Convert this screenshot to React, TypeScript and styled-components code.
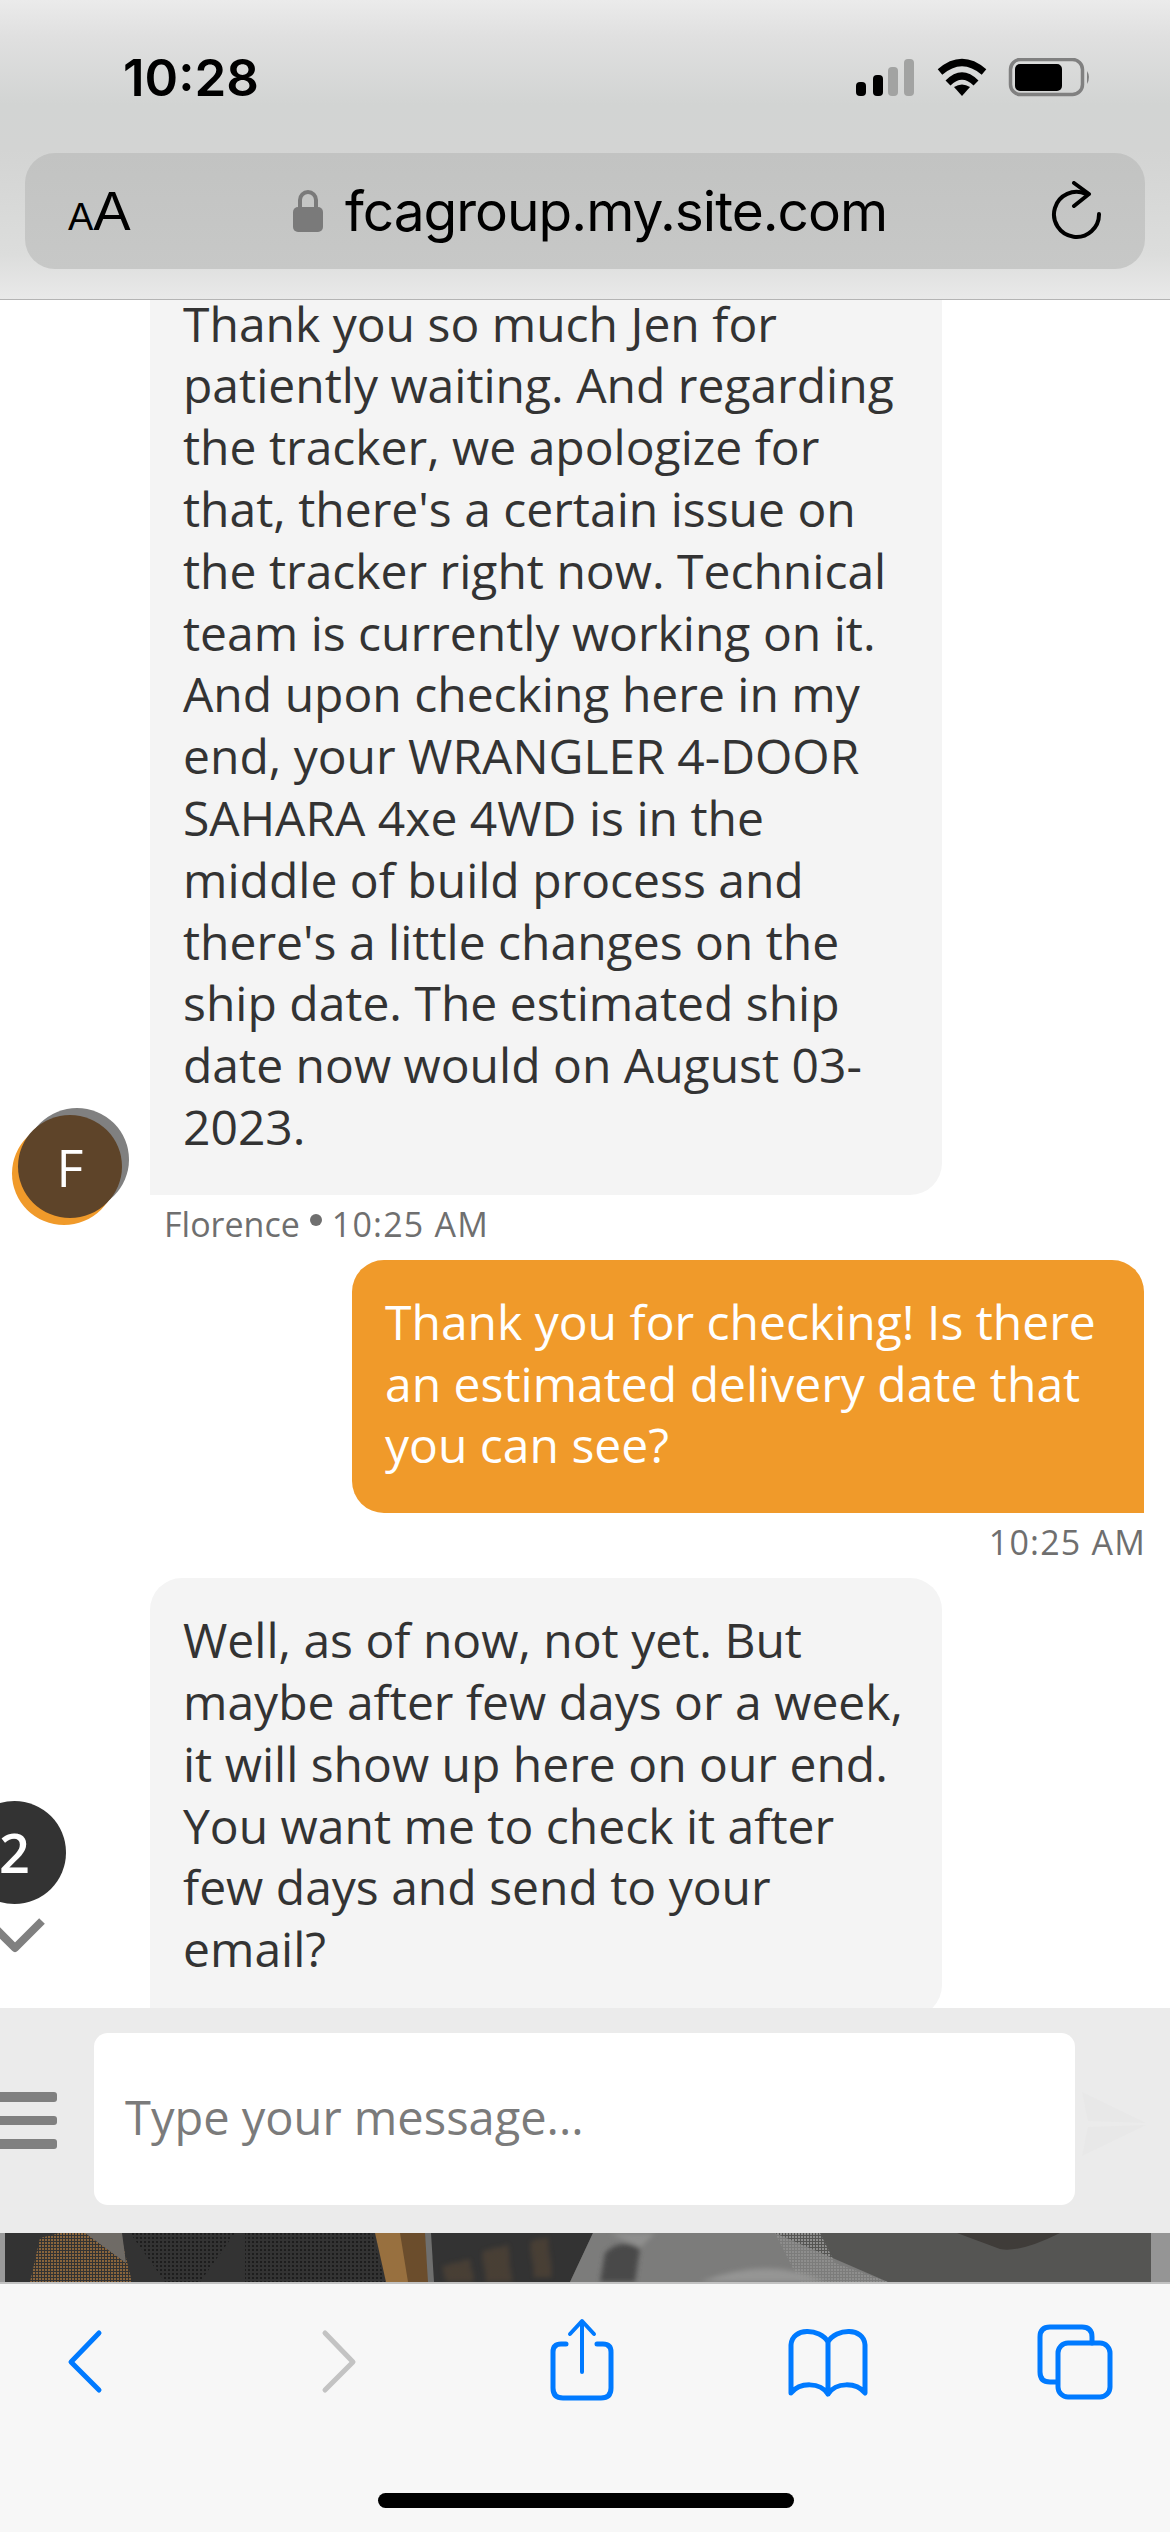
import styled, {createGlobalStyle} from 'styled-components'

const GlobalStyle = createGlobalStyle`
  html, body { margin: 0; padding: 0; background: #fff; }
  * { box-sizing: border-box; }
`

const Phone = styled.div`
  width: 1170px;
  height: 2532px;
  display: flex;
  flex-direction: column;
  overflow: hidden;
  font-family: "Open Sans", "Liberation Sans", sans-serif;
`

const BrowserTop = styled.header`
  height: 300px;
  flex-shrink: 0;
  padding: 0 25px;
  display: flex;
  flex-direction: column;
  background: linear-gradient(180deg, #ebebeb 0%, #e0e0e0 12%, #d2d4d3 35%, #d3d4d3 50%, #dcdddc 85%, #e9e9e9 100%);
  border-bottom: 1px solid #b4b4b4;
`
const StatusBar = styled.div`
  height: 153px;
  padding: 0 54px 0 98px;
  display: flex;
  align-items: flex-start;
  justify-content: space-between;
  svg { display: block; }
`
const Clock = styled.div`
  margin-top: 50px;
  font: 600 51px/56px Inter, sans-serif;
  color: #000;
`
const StatusIcons = styled.div`
  margin-top: 58px;
  display: flex;
`
const AddressBar = styled.div`
  height: 116px;
  border-radius: 30px;
  background: linear-gradient(180deg, #c2c3c2, #c7c8c7);
  padding: 0 41px 0 43px;
  display: flex;
  align-items: center;
  color: #000;
`
const TextSize = styled.div`
  width: 225px;
  margin-top: 6px;
  font: 400 56px/60px "Liberation Sans", sans-serif;
  small { font-size: 38px; }
`
const Url = styled.div`
  display: flex;
  align-items: center;
  gap: 22px;
  font: 400 55px/66px Inter, sans-serif;
  letter-spacing: -1px;
  flex: 1;
`

const Chat = styled.main`
  position: relative;
  flex: 1;
  min-height: 0;
  overflow: hidden;
  background: #fff;
  display: flex;
  flex-direction: column;
  justify-content: flex-end;
  padding: 0 26px 0 150px;
`
const Bubble = styled.div<{$mine?: boolean}>`
  flex-shrink: 0;
  width: 792px;
  padding: 31px 33px 37px;
  font-size: 48px;
  line-height: 61.8px;
  white-space: nowrap;
  align-self: ${p => p.$mine ? 'flex-end' : 'flex-start'};
  background: ${p => p.$mine ? '#f09a2a' : '#f4f4f4'};
  color: ${p => p.$mine ? '#fff' : '#333'};
  border-radius: ${p => p.$mine ? '32px 32px 0 32px' : '32px 32px 32px 0'};
`
const LastBubble = styled(Bubble)`
  margin-bottom: -9px;
`
const Meta = styled.div<{$mine?: boolean}>`
  flex-shrink: 0;
  height: 65px;
  padding: 0 0 7px 14px;
  margin-right: -2px;
  display: flex;
  align-items: center;
  gap: 10px;
  justify-content: ${p => p.$mine ? 'flex-end' : 'flex-start'};
  font-size: 34px;
  color: #6f6f6f;
  i {
    width: 12px;
    height: 12px;
    margin-bottom: 8px;
    border-radius: 50%;
    background: #6f6f6f;
  }
  b {
    font-weight: 400;
    letter-spacing: 1.2px;
  }
`
const Avatar = styled.div`
  position: absolute;
  left: 18px;
  bottom: 790px;
  width: 104px;
  height: 103px;
  border-radius: 50%;
  background: #5e4429;
  color: #fff;
  font-size: 52px;
  display: flex;
  align-items: center;
  justify-content: center;
  box-shadow: -6px 7px 0 #f09a2a, 7px -7px 0 #808080;
`
const UnreadBadge = styled.div`
  position: absolute;
  left: -37px;
  top: 1501px;
  width: 103px;
  height: 103px;
  border-radius: 50%;
  background: #333;
  color: #fff;
  font: 600 54px/103px "Open Sans", sans-serif;
  text-align: center;
`
const DownChevron = styled.svg`
  position: absolute;
  left: -16px;
  top: 1616px;
`

const Composer = styled.form`
  height: 225px;
  flex-shrink: 0;
  margin: 0;
  background: #ebebeb;
  display: grid;
  grid-template-columns: 94px 981px 95px;
  align-items: center;
`
const MenuButton = styled.div`
  display: flex;
  flex-direction: column;
  gap: 14px;
  width: 57px;
  span {
    height: 9.5px;
    border-radius: 0 3px 3px 0;
    background: #808080;
  }
`
const Input = styled.div`
  height: 172px;
  margin-bottom: 3px;
  padding: 0 31px 5px;
  border-radius: 14px;
  background: #fff;
  display: flex;
  align-items: center;
  font-size: 47px;
  color: #7b7b7b;
`
const SendIcon = styled.svg`
  margin: 6px 0 0 5px;
`

const Strip = styled.svg`
  display: block;
  flex-shrink: 0;
`

const Toolbar = styled.nav`
  height: 250px;
  flex-shrink: 0;
  background: #f7f7f7;
  border-top: 2px solid #c2c2c2;
  position: relative;
`
const ToolbarIcons = styled.svg`
  position: absolute;
  left: 0;
  top: 0;
`
const HomeBar = styled.div`
  position: absolute;
  bottom: 24px;
  left: 378px;
  width: 416px;
  height: 15px;
  border-radius: 8px;
  background: #000;
`

const first = [
  'Thank you so much Jen for',
  'patiently waiting. And regarding',
  'the tracker, we apologize for',
  "that, there's a certain issue on",
  'the tracker right now. Technical',
  'team is currently working on it.',
  'And upon checking here in my',
  'end, your WRANGLER 4-DOOR',
  'SAHARA 4xe 4WD is in the',
  'middle of build process and',
  "there's a little changes on the",
  'ship date. The estimated ship',
  'date now would on August 03-',
  '2023.',
]
const second = [
  'Thank you for checking! Is there',
  'an estimated delivery date that',
  'you can see?',
]
const third = [
  'Well, as of now, not yet. But',
  'maybe after few days or a week,',
  'it will show up here on our end.',
  'You want me to check it after',
  'few days and send to your',
  'email?',
]

const Lines: React.FC<{items: string[]}> = ({items}) => <>
  {items.map(line => <div key={line}>{line}</div>)}
</>

const App: React.FC = () => {
  return <Phone>
    <GlobalStyle />
    <BrowserTop>
      <StatusBar>
        <Clock>10:28</Clock>
        <StatusIcons>
          <svg width="235" height="40" viewBox="0 0 235 40">
            <rect x="0" y="24" width="10" height="14" rx="4" fill="#000" />
            <rect x="17" y="17" width="10" height="21" rx="4" fill="#000" />
            <rect x="32" y="9" width="10" height="29" rx="4" fill="#a2a3a2" />
            <rect x="48" y="1" width="10" height="37" rx="4" fill="#a2a3a2" />
            <path d="M84 14 Q106 -5 128 14" fill="none" stroke="#000" strokeWidth="7" />
            <path d="M92 25 Q106 11 120 25" fill="none" stroke="#000" strokeWidth="7" />
            <path d="M98 29 L106 38 L114 29 Q106 24 98 29 Z" fill="#000" />
            <rect x="154.5" y="1.5" width="72" height="35" rx="10" fill="none" stroke="#808080" strokeWidth="3.5" />
            <rect x="159" y="6" width="47" height="27" rx="5" fill="#000" />
            <path d="M231 13 Q235 19 231 26 Z" fill="#808080" />
          </svg>
        </StatusIcons>
      </StatusBar>
      <AddressBar>
        <TextSize><small>A</small>A</TextSize>
        <Url>
          <svg width="30" height="44" viewBox="0 0 30 44">
            <path d="M7 19 V11 a8 8 0 0 1 16 0 V19" fill="none" stroke="#7a7a7a" strokeWidth="4" />
            <rect x="0" y="18" width="30" height="25" rx="5" fill="#7a7a7a" />
          </svg>
          fcagroup.my.site.com
        </Url>
        <svg width="54" height="60" viewBox="0 0 54 60" fill="none" stroke="#000" strokeWidth="4" strokeLinecap="round" strokeLinejoin="round">
          <path d="M36 13 A22.5 22.5 0 1 0 49 33" />
          <path d="M24 2 L39 13 L24 25" />
        </svg>
      </AddressBar>
    </BrowserTop>

    <Chat>
      <Bubble><Lines items={first} /></Bubble>
      <Meta>Florence <i /> <b>10:25 AM</b></Meta>
      <Bubble $mine><Lines items={second} /></Bubble>
      <Meta $mine><b>10:25 AM</b></Meta>
      <LastBubble><Lines items={third} /></LastBubble>
      <Avatar>F</Avatar>
      <UnreadBadge>2</UnreadBadge>
      <DownChevron width="64" height="40" viewBox="0 0 64 40">
        <path d="M4 5 L31 32 L58 5" fill="none" stroke="#808080" strokeWidth="8" strokeLinejoin="round" />
      </DownChevron>
    </Chat>

    <Composer>
      <MenuButton><span /><span /><span /></MenuButton>
      <Input>Type your message...</Input>
      <SendIcon width="68" height="68" viewBox="0 0 68 68">
        <path d="M2 2 L66 33 L8 31 Z M8 37 L66 35 L2 66 Z" fill="#e8e8e8" />
      </SendIcon>
    </Composer>

    <Strip width="1170" height="49" viewBox="0 0 1170 49">
      <defs>
        <filter id="soft"><feGaussianBlur stdDeviation="2.5" /></filter>
        <pattern id="specks" width="4" height="4" patternUnits="userSpaceOnUse">
          <rect width="2" height="2" fill="#1d1d1d" />
        </pattern>
        <pattern id="rust" width="3" height="3" patternUnits="userSpaceOnUse">
          <rect width="2" height="2" fill="#8a653c" />
        </pattern>
        <pattern id="ash" width="3" height="3" patternUnits="userSpaceOnUse">
          <rect width="2" height="2" fill="#8e8e8d" />
        </pattern>
      </defs>
      <rect width="1170" height="49" fill="#333" />
      <path d="M30 49 L40 5 L60 0 H120 L132 49 Z" fill="url(#rust)" />
      <path d="M85 0 H122 L126 30 Z" fill="#6f6b66" />
      <path d="M245 0 H372 L385 49 H245 Z M130 0 H235 L200 49 H165 Z" fill="url(#specks)" />
      <path d="M375 0 H402 L410 49 H386 Z" fill="#98703f" />
      <path d="M400 0 H425 L432 49 H408 Z" fill="#6b4d2c" />
      <path d="M425 0 H431 L434 49 H428 Z" fill="#6f6f6e" />
      <g filter="url(#soft)" opacity="0.55">
        <path d="M442 33 L470 26 L474 49 H446 Z M482 18 L508 12 L512 49 H486 Z M530 8 L548 4 L552 44 H534 Z" fill="url(#rust)" />
      </g>
      <path d="M593 0 H1151 V49 H570 Z" fill="#555553" />
      <path d="M593 0 H775 L888 49 H570 Z" fill="#7c7c7b" />
      <path d="M775 0 H820 L835 30 L888 49 H800 Z" fill="url(#ash)" />
      <g filter="url(#soft)">
        <path d="M605 20 Q620 5 640 15 L635 49 H600 Z" fill="#4a4a49" />
        <path d="M610 0 H655 L640 15 Z" fill="#8f8f8e" />
        <path d="M700 49 Q770 22 825 49 Z" fill="#959594" />
      </g>
      <path d="M957 0 H1060 Q1020 20 1000 16 Z" fill="#3f3c39" />
      <rect width="5" height="49" fill="#9a9a9a" />
      <rect x="1151" width="19" height="49" fill="#959595" />
    </Strip>

    <Toolbar>
      <ToolbarIcons width="1170" height="248" viewBox="0 2284 1170 248" fill="none" stroke="#007aff" strokeLinecap="round" strokeLinejoin="round">
        <path d="M99 2333 L71 2362 L99 2390" strokeWidth="5" />
        <path d="M325 2333 L353 2362 L325 2390" stroke="#c3c3c3" strokeWidth="5" />
        <path d="M566 2344 H561 Q553 2344 553 2352 V2388 Q553 2398 563 2398 H601 Q611 2398 611 2388 V2352 Q611 2344 603 2344 H597" strokeWidth="5" />
        <path d="M582 2322 V2372 M570 2334 L582 2321 L594 2334" strokeWidth="4" />
        <path d="M828 2342 C820 2328 792 2327 791 2345 V2393 C800 2382 820 2382 828 2394 C836 2382 856 2382 865 2393 V2345 C864 2327 836 2328 828 2342 V2394" strokeWidth="5" />
        <path d="M1056 2382 H1050 Q1040 2382 1040 2372 V2337 Q1040 2327 1050 2327 H1082 Q1092 2327 1092 2337 V2343" strokeWidth="5" />
        <rect x="1058" y="2343" width="52" height="54" rx="10" strokeWidth="5" />
      </ToolbarIcons>
      <HomeBar />
    </Toolbar>
  </Phone>
}

export default App
